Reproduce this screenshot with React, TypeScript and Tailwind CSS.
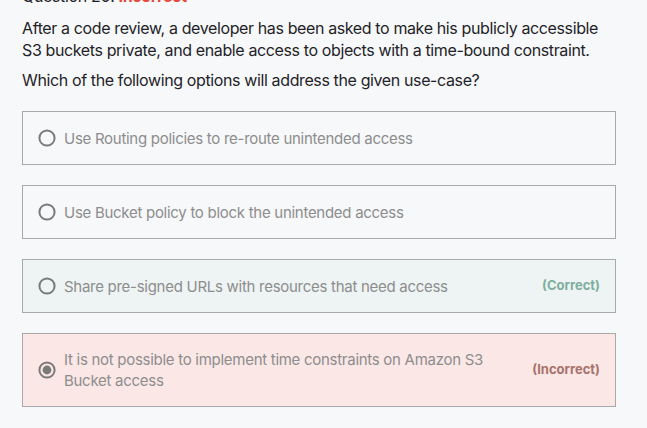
import React from "react";

type Opt = { text: string; state?: "correct" | "incorrect"; checked?: boolean };

const OPTIONS: Opt[] = [
  { text: "Use Routing policies to re-route unintended access" },
  { text: "Use Bucket policy to block the unintended access" },
  { text: "Share pre-signed URLs with resources that need access", state: "correct" },
  {
    text: "It is not possible to implement time constraints on Amazon S3 Bucket access",
    state: "incorrect",
    checked: true,
  },
];

function Radio({ checked }: { checked?: boolean }) {
  return (
    <svg width="18" height="18" viewBox="0 0 18 18" className="shrink-0">
      <circle cx="9" cy="9" r="7.6" fill="none" stroke="#7a7a7a" strokeWidth="2" />
      {checked && <circle cx="9" cy="9" r="4.4" fill="#7a7a7a" />}
    </svg>
  );
}

export default function App() {
  return (
    <div className="min-h-[428px] w-full overflow-hidden bg-[#f7f8fa] font-['Inter',sans-serif] text-[#1f2328]">
      <div className="pl-[22px] pr-[31px]">
        {/* Question header, scrolled partly out of view */}
        <p className="-mt-[15px] text-[16px] leading-[22px] tracking-[-0.35px]">
          Question 20: <span className="font-bold text-[#e5483b]">Incorrect</span>
        </p>

        <p className="mt-[10px] text-[16px] leading-[22px] tracking-[-0.38px]">
          After a code review, a developer has been asked to make his publicly accessible S3 buckets private, and enable
          access to objects with a time-bound constraint.
        </p>
        <p className="mt-[8px] text-[16px] leading-[22px] tracking-[-0.38px]">
          Which of the following options will address the given use-case?
        </p>

        <div className="mt-[20px] flex flex-col gap-[20px]">
          {OPTIONS.map((o) => {
            const bg =
              o.state === "correct" ? "bg-[#eef4f4]" : o.state === "incorrect" ? "bg-[#fbe7e6]" : "bg-[#f7f8fa]";
            return (
              <div
                key={o.text}
                className={`flex items-center gap-[8px] border border-[#a9a9a9] pl-[15px] pr-[15px] ${bg} ${
                  o.state === "incorrect" ? "h-[74px]" : "h-[54px]"
                }`}
              >
                <Radio checked={o.checked} />
                <span className="max-w-[430px] text-[15px] leading-[21px] tracking-[-0.28px] text-[#8d8d8d]">
                  {o.text}
                </span>
                {o.state === "correct" && (
                  <span className="ml-auto text-[13px] font-bold text-[#7fae9c]">(Correct)</span>
                )}
                {o.state === "incorrect" && (
                  <span className="ml-auto text-[13px] font-bold text-[#a8726c]">(Incorrect)</span>
                )}
              </div>
            );
          })}
        </div>
      </div>
    </div>
  );
}
